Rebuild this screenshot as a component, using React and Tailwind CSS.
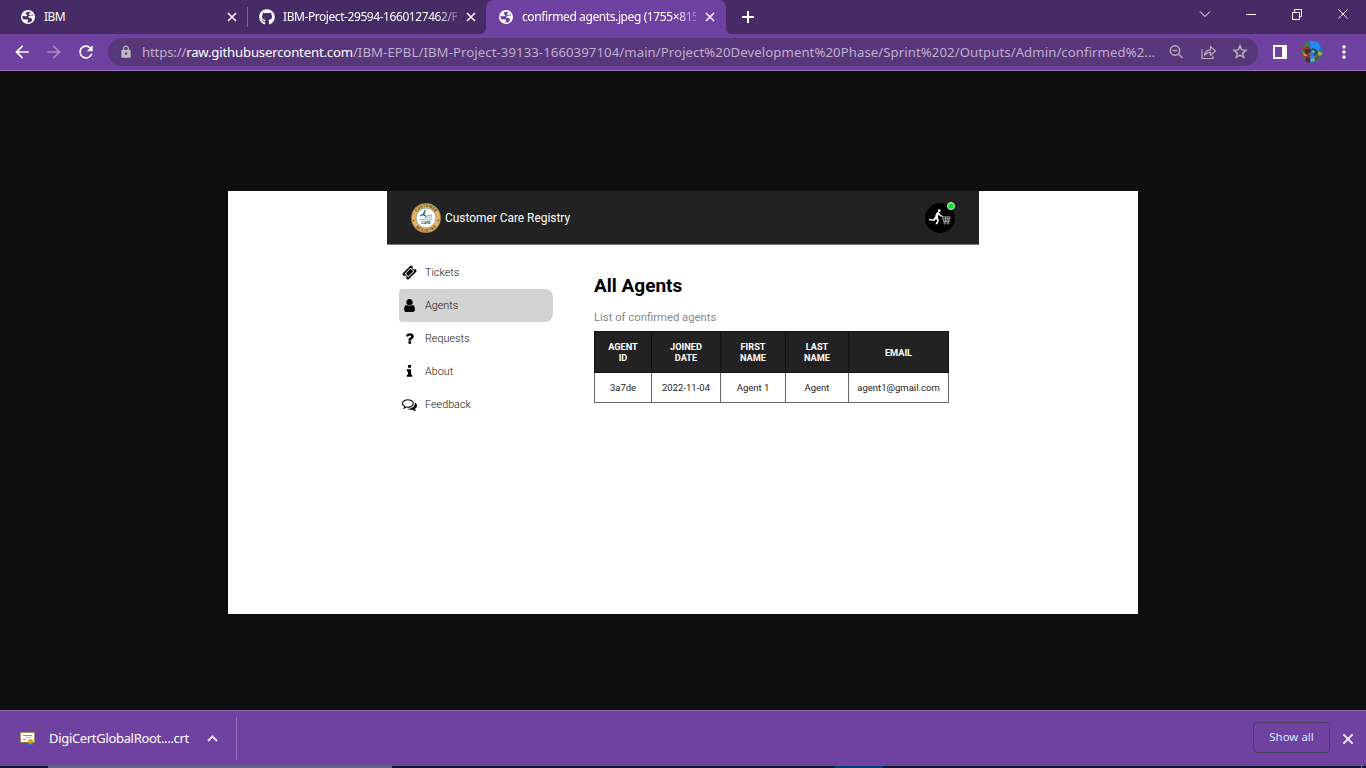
import React from "react";
import { FaGithub } from "react-icons/fa";
import { MdArrowBack, MdArrowForward, MdRefresh, MdLock, MdMoreVert } from "react-icons/md";

const UI = "font-['Noto_Sans',sans-serif]";

function Globe({ bg }) {
  return (
    <svg width="14" height="14" viewBox="0 0 14 14" className="shrink-0">
      <circle cx="7" cy="7" r="7" fill="#fff" />
      <path d="M7.8 1.7C6 1.6 4.600 2.500 4.700 3.700c.1.9 1.300.6 1.600 1.300.3.9-.9 1.300-2.200 1.200-1 0-1.900-.3-2.400-.8C1.200 7 1.600 8.300 2.300 9.200c1 .2 3.200.1 4.400.4.9.3.6 1.200 0 1.700-.3.300-.6.800-.2 1.100 2.300.2 4-.8 4.900-2.300-.6-.6-1.200-1.200-1.100-2C9.300 8 7.900 8.200 7.400 7.300c-.4-.8.400-1.400 1.300-1.600.9-.2 2.300-.1 3.400.1C11.700 3.900 10 2 7.800 1.700z" fill={bg} />
      <path d="M8.300 3.200c.9-.6 1.800-.4 2.500.3.5.6.4 1.300-.4 1.500-1 .2-1.600-.2-2.300-.5-.6-.3-.4-.9.2-1.300z" fill="#fff" />
    </svg>
  );
}

function Cross({ size, className }) {
  return (
    <svg width={size} height={size} viewBox="0 0 14 14" fill="none" stroke="#f3eef8" strokeWidth="1.700" className={className}>
      <path d="M3 3l8 8M11 3l-8 8" />
    </svg>
  );
}

function Tab({ icon, title, width, fade }) {
  return (
    <div className="flex h-[34px] items-center">
      {icon}
      <div className={`${width} whitespace-nowrap text-[12px] leading-[34px] text-white ${fade}`}>{title}</div>
      <Cross size={14} className="ml-[7px] shrink-0" />
    </div>
  );
}

function TabStrip() {
  return (
    <div className="flex h-[34px] bg-[#472b67]">
      <div className="flex w-[247px] pl-[21px]">
        <Tab icon={<Globe bg="#472b67" />} title={<span className="tracking-[-0.6px]">IBM</span>} width="ml-[9px] w-[174px]" fade="" />
      </div>
      <div className="mt-[7px] h-[20px] w-px bg-[#8466a5]" />
      <div className="flex w-[238px] pl-[11px]">
        <Tab
          icon={<FaGithub size={16} className="shrink-0 text-white" />}
          title={<span className="tracking-[-0.43px]">IBM-Project-29594-1660127462/P</span>}
          width="ml-[8px] w-[174px]"
          fade="[mask-image:linear-gradient(to_right,black_88%,transparent_105%)]"
        />
      </div>
      <div className="relative flex w-[240px] rounded-t-[8px] bg-[#6f42a1] pl-[13px]">
        <div className="absolute bottom-0 -left-[7px] h-[7px] w-[7px] bg-[radial-gradient(circle_at_0_0,#472b67_7px,#6f42a1_7.500px)]" />
        <div className="absolute bottom-0 -right-[7px] h-[7px] w-[7px] bg-[radial-gradient(circle_at_100%_0,#472b67_7px,#6f42a1_7.500px)]" />
        <Tab
          icon={<Globe bg="#6f42a1" />}
          title={<span className="tracking-[-0.4px]">confirmed agents.jpeg (1755×815</span>}
          width="ml-[9px] w-[174px]"
          fade="[mask-image:linear-gradient(to_right,black_88%,transparent_105%)]"
        />
      </div>
      <svg width="12" height="12" viewBox="0 0 12 12" className="ml-[16px] mt-[11px]" stroke="#fff" strokeWidth="2"><path d="M0 6h12M6 0v12" /></svg>
      <svg width="160" height="34" viewBox="0 0 160 34" className="ml-auto overflow-visible" fill="none" stroke="#fff">
        <path d="M-6 11.500l5 5 5-5" />
        <path d="M40 14.500h10M86.500 12.500h7v7h-7zM88.500 12v-2.500h7v7h-2.500M132.500 9.500l9 9M141.500 9.500l-9 9" />
      </svg>
    </div>
  );
}

function Toolbar() {
  return (
    <div className="flex h-[37px] items-center border-b border-[#9272b8] bg-[#6f42a1]">
      <MdArrowBack size={20} className="ml-[12px] text-white" />
      <MdArrowForward size={20} className="ml-[12px] text-[#a98bc8]" />
      <MdRefresh size={20} className="ml-[12px] text-white" />
      <div className="ml-[12px] flex h-[28px] w-[1150px] items-center rounded-full bg-[#573679]">
        <MdLock size={14} className="ml-[11px] shrink-0 text-[#bdbdbd]" />
        <div className="ml-[9px] w-[1024px] shrink-0 whitespace-nowrap text-[13.200px] leading-[28px] text-[#c0aed0]">
          <span className="tracking-[-0.160px]">https://</span>
          <span className="tracking-[-0.190px] text-white">raw.githubusercontent.com</span>
          <span className="tracking-[0.068px]">/IBM-EPBL/IBM-Project-39133-1660397104/main/Project%20Development%20Phase/Sprint%202/Outputs/Admin/confirmed%2...</span>
        </div>
        <svg width="82" height="16" viewBox="0 0 82 16" fill="none" stroke="#b9aebf" strokeWidth="1.500" className="ml-[3px] shrink-0">
          <circle cx="6" cy="6.500" r="4.700" />
          <path d="M9.500 10l4 4M3.800 6.500h4.400" />
          <path d="M33 5v9.500h11v-3M35.500 11c.5-3.500 2.500-5 6-5.200V2.500L46.500 7l-5 4.200V8.300c-2.700 0-4.300.8-6 2.700z" strokeWidth="1.200" />
          <path d="M71 1.900l1.700 4 4.300.4-3.300 2.800 1 4.200-3.700-2.200-3.700 2.200 1-4.200-3.300-2.800 4.300-.4z" strokeWidth="1.500" />
        </svg>
      </div>
      <div className="ml-[15px] h-[14px] w-[14px] border-2 border-r-[5px] border-white" />
      <svg width="22" height="22" viewBox="0 0 22 22" className="ml-[14px]">
        <defs><clipPath id="avatar"><circle cx="11" cy="11" r="11" /></clipPath></defs>
        <g clipPath="url(#avatar)">
          <path fill="#276ba9" d="M0 0h22v22H0z" />
          <path fill="#208cf0" d="M9 0h8l3 8-6 3-5-4zM8 12h8l-1 6H9z" />
          <path fill="#9b3a2c" d="M0 5l7-2 2 4-4 4 5 3-2 6-5-3-3-5z" />
          <path fill="#4c2630" d="M2 9l7-1 2 2-6 4zM6 16l4 2-2 4H3z" />
          <path fill="#438346" d="M5 1l4 1-1 3-5 1zM15 12l5 1-2 6-5 1zM1 9l3 1-1 3-3-1z" />
          <path fill="#c6a437" d="M17 10l5 2-3 3-2-2zM2 12l3 1 1 2-3 0z" />
          <path fill="#174c7c" d="M11 7l4 1 2 4-3 3-4-3z" />
          <path fill="#9b3a2c" d="M14 16l5-1-2 4-4 1z" />
          <path fill="#7ba8b0" d="M11 9l3 1-1 3-3-2zM9 18l4-1 1 3-4 1z" />
        </g>
      </svg>
      <MdMoreVert size={20} className="ml-[11px] text-white" />
    </div>
  );
}

function BadgeLogo() {
  return (
    <svg width="30" height="30" viewBox="0 0 100 100">
      <circle cx="50" cy="50" r="49" fill="#e9b35c" stroke="#78705c" strokeWidth="2" />
      <circle cx="50" cy="50" r="33" fill="#fff" stroke="#5d8a8c" strokeWidth="2" />
      <defs>
        <path id="topArc" d="M14 50a36 36 0 0 1 72 0" />
        <path id="bottomArc" d="M4 50a46 46 0 0 0 92 0" />
      </defs>
      <g fill="#4c401f" fontFamily="Roboto" fontWeight="700" fontSize="13" textAnchor="middle">
        <text><textPath href="#topArc" startOffset="50%" textLength="72">CUSTOMER</textPath></text>
        <text><textPath href="#bottomArc" startOffset="50%" textLength="78">REGISTRY</textPath></text>
        <text x="50" y="69" fill="#23616c" fontSize="13" textLength="32">CARE</text>
      </g>
      <circle cx="9" cy="58" r="2.500" fill="#4c401f" /><circle cx="91" cy="58" r="2.500" fill="#4c401f" />
      <path d="M49 22c3 1 2 5-1 5l-3 11 6 5v9h-3v-7l-8-4-10 4v-3l9-5 5-10z" fill="#23616c" />
      <path d="M55 41h14l-2 8H57zM28 56h44" stroke="#6c9299" strokeWidth="2.500" fill="none" />
    </svg>
  );
}

function ShopperAvatar() {
  return (
    <div className="relative h-[30px] w-[30px]">
      <svg width="30" height="30" viewBox="0 0 30 30">
        <circle cx="15" cy="15" r="15" fill="#000" />
        <circle cx="14.300" cy="7.700" r="1.400" fill="#fff" />
        <path d="M13.500 8.500c-2 .8-3 2.600-3.300 5.300l-2.200 2.800-4-.8v1.400l5 .9 2.200-2 1 1.600-1.900 3.500 2.100.1 1.500-4.100-1.200-3 1.100-2.500 1.300 1.600 2.500.5.200-.8-2-.8z" fill="#fff" />
        <path d="M16 12.800h1.400l1.100 5.700h6M17.800 13.800h7.400l-1 4h-5.800M18.200 15.700h6.500M20.500 14v3.500M22.800 14v3.500" stroke="#ccc" fill="none" strokeWidth=".7" />
        <circle cx="19.800" cy="20.300" r=".9" fill="none" stroke="#ccc" strokeWidth=".7" /><circle cx="23" cy="20.300" r=".9" fill="none" stroke="#ccc" strokeWidth=".7" />
      </svg>
      <div className="absolute -top-px left-[22px] h-[8px] w-[8px] rounded-full border border-[#d8f5d8] bg-[#05e51c]" />
    </div>
  );
}

const navItems = [
  ["Tickets", "0 0 1792 1792", "M1024 452l316 316-572 572-316-316zm-211 979l618-618q19-19 19-45t-19-45l-362-362q-18-18-45-18t-45 18l-618 618q-19 19-19 45t19 45l362 362q18 18 45 18t45-18zm889-637l-907 908q-37 37-90.5 37t-90.5-37l-126-126q56-56 56-136t-56-136-136-56-136 56l-125-126q-37-37-37-90.5t37-90.5l907-906q37-37 90.5-37t90.5 37l125 125q-56 56-56 136t56 136 136 56 136-56l126 125q37 37 37 90.5t-37 90.5z"],
  ["Agents", "-256 0 1792 1792", "M1280 1399q0 109-62.5 187t-150.5 78h-854q-88 0-150.5-78t-62.5-187q0-85 8.5-160.5t31.5-152 58.5-131 94-89 134.5-34.5q131 128 313 128t313-128q76 0 134.5 34.5t94 89 58.5 131 31.5 152 8.5 160.5zm-256-887q0 159-112.5 271.5t-271.5 112.5-271.5-112.5-112.5-271.5 112.5-271.5 271.5-112.5 271.5 112.5 112.5 271.5z"],
  ["Requests", "0 0 1792 1792", "M1088 1256v240q0 16-12 28t-28 12h-240q-16 0-28-12t-12-28v-240q0-16 12-28t28-12h240q16 0 28 12t12 28zm316-600q0 54-15.5 101t-35 76.5-55 59.5-57.5 43.5-61 35.5q-41 23-68.5 65t-27.500 67q0 17-12 32.500t-28 15.500h-240q-15 0-25.500-18.500t-10.500-37.500v-45q0-83 65-156.500t143-108.500q59-27 84-56t25-76q0-42-46.500-74t-107.500-32q-65 0-108 29-35 25-107 115-13 16-31 16-12 0-25-8l-164-125q-13-10-15.500-25t5.500-28q160-266 464-266 80 0 161 31t146 83 106 127.500 41 158.500z"],
  ["About", "0 0 1792 1792", "M1216 1344v128q0 26-19 45t-45 19h-512q-26 0-45-19t-19-45v-128q0-26 19-45t45-19h64v-384h-64q-26 0-45-19t-19-45v-128q0-26 19-45t45-19h384q26 0 45 19t19 45v576h64q26 0 45 19t19 45zm-128-1152v192q0 26-19 45t-45 19h-256q-26 0-45-19t-19-45v-192q0-26 19-45t45-19h256q26 0 45 19t19 45z"],
  ["Feedback", "0 0 1792 1792", "M704 384q-153 0-286 52t-211.5 141-78.5 191q0 82 53 158t149 132l97 56-35 84q34-20 62-39l44-31 53 10q78 14 153 14 153 0 286-52t211.5-141 78.5-191-78.5-191-211.5-141-286-52zm0-128q191 0 353.5 68.5t256.5 186.5 94 257-94 257-256.5 186.5-353.5 68.5q-86 0-176-16-124 88-278 128-36 9-86 16h-3q-11 0-20.5-8t-11.5-21q-1-3-1-6.500t.5-6.500 2-6l2.500-5 3.500-5.500 4-5 4.500-5 4-4.500q5-6 23-25t26-29.500 22.500-29 25-38.500 20.500-44q-124-72-195-177t-71-224q0-139 94-257t256.500-186.500 353.500-68.500zm822 1169q10 24 20.500 44t25 38.500 22.500 29 26 29.500 23 25q1 1 4 4.500t4.500 5 4 5 3.500 5.500l2.500 5 2 6 .5 6.500-1 6.500q-3 14-13 22t-22 7q-50-7-86-16-154-40-278-128-90 16-176 16-271 0-472-132 58 4 88 4 161 0 309-45t264-129q125-92 192-212t67-254q0-77-23-152 129 71 204 178t75 230q0 120-71 224.500t-195 176.500z"],
];

function Sidebar() {
  return (
    <nav className="ml-[12px] mt-[11px] w-[154px] text-[10.800px] font-light text-[#111]">
      {navItems.map(([label, box, d]) => (
        <div key={label} className={`flex h-[33px] items-center rounded-l-[4px] rounded-r-[8px] pl-[3px] ${label === "Agents" ? "bg-[#d3d3d3]" : ""}`}>
          <svg width="15" height="15" viewBox={box} className="fill-black"><path d={d} /></svg>
          <span className="ml-[8px] pt-px">{label}</span>
        </div>
      ))}
    </nav>
  );
}

function AgentsTable() {
  const th = "border border-[#111] p-0 text-center font-bold";
  const td = "border border-[#666] p-0 text-center";
  return (
    <table className="w-[354px] table-fixed border-collapse text-[9.200px] leading-[11px]">
      <colgroup>
        <col className="w-[57px]" /><col className="w-[69px]" /><col className="w-[65px]" /><col className="w-[63px]" /><col className="w-[100px]" />
      </colgroup>
      <thead>
        <tr className="h-[41px] bg-[#222] text-white">
          <th className={th}>AGENT<br />ID</th>
          <th className={th}>JOINED<br />DATE</th>
          <th className={th}>FIRST<br />NAME</th>
          <th className={th}>LAST<br />NAME</th>
          <th className={th}>EMAIL</th>
        </tr>
      </thead>
      <tbody>
        <tr className="h-[30px] text-[9.500px] text-[#222]">
          {["3a7de", "2022-11-04", "Agent 1", "Agent", "agent1@gmail.com"].map((v) => <td key={v} className={td}>{v}</td>)}
        </tr>
      </tbody>
    </table>
  );
}

function Registry() {
  return (
    <div className="flex h-[423px] w-[910px] justify-center bg-white font-['Roboto',sans-serif]">
      <div className="w-[592px]">
        <header className="flex h-[54px] items-center justify-between border-b border-[#777] bg-[#222] px-[24px] text-white">
          <div className="flex items-center">
            <BadgeLogo />
            <span className="ml-[4px] pt-[2px] text-[11.900px]">Customer Care Registry</span>
          </div>
          <ShopperAvatar />
        </header>
        <div className="flex">
          <Sidebar />
          <main className="ml-[41px] pt-[29px]">
            <h1 className="text-[19px] font-bold leading-[24px] text-black">All Agents</h1>
            <p className="mb-[5px] mt-[12px] text-[11.300px] leading-[16px] text-[#888]">List of confirmed agents</p>
            <AgentsTable />
          </main>
        </div>
      </div>
    </div>
  );
}

function Downloads() {
  return (
    <div className="flex h-[56px] items-center border-t border-[#9272b8] bg-[#6f42a1] text-white">
      <svg width="16" height="14" viewBox="0 0 16 14" className="ml-[20px]">
        <path d="M.5.5h14v10H.5z" fill="#fff" stroke="#a98d62" />
        <path d="M0 11h15" stroke="#715834" />
        <path d="M3 3.500h9M3 7.500h3" stroke="#858da8" /><path d="M6 5.500h5" stroke="#a4bbcc" />
        <path d="M8.500 10l-.5 4 2.500-1 2.500 1-.5-4z" fill="#1978e6" />
        <circle cx="10.500" cy="9.500" r="2.500" fill="#d49506" /><circle cx="10" cy="9" r="1" fill="#f0b62d" />
      </svg>
      <span className="ml-[13px] w-[152px] whitespace-nowrap text-[13px] tracking-[-0.320px]">DigiCertGlobalRoot....crt</span>
      <svg width="16" height="10" viewBox="0 0 16 10" className="ml-[4px]" fill="none" stroke="#e7dff0" strokeWidth="2"><path d="M3 7l4.500-4.500L12 7" /></svg>
      <div className="ml-[15px] h-[43px] w-px bg-[#9272b8]" />
      <button className="mb-[2px] ml-auto h-[31px] w-[77px] rounded-[4px] border border-[#493f59] pb-[2px] text-[11.500px] leading-none text-[#d7e7f8]">Show all</button>
      <Cross size={16} className="ml-[10px] mr-[10px]" />
    </div>
  );
}

export default function App() {
  return (
    <div className={`flex h-[768px] w-[1366px] flex-col overflow-hidden bg-[#0e0e0e] ${UI}`}>
      <TabStrip />
      <Toolbar />
      <div className="flex flex-1 justify-center pt-[120px]"><Registry /></div>
      <Downloads />
      <div className="flex h-[2px] bg-[#0b1c30]">
        <div className="ml-[48px] w-[344px] bg-[#596a79]" />
        <div className="ml-[443px] w-[48px] bg-[#003d76]" />
        <div className="ml-[478px] w-px bg-[#7d8791]" />
      </div>
    </div>
  );
}
